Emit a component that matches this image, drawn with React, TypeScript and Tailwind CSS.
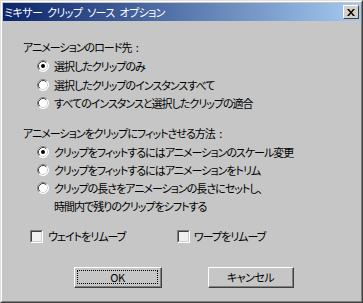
import React from "react";

const font = "font-['MS_UI_Gothic','Noto_Sans_CJK_JP',sans-serif] [font-feature-settings:'palt'] tracking-[-1px] [word-spacing:3px]";

function Radio({ checked }: { checked?: boolean }) {
  return (
    <svg width="12" height="12" viewBox="0 0 12 12" className="shrink-0">
      <circle cx="6" cy="6" r="5.5" fill="#ffffff" />
      <path d="M9.89 2.11 A5.5 5.5 0 0 0 2.11 9.89" fill="none" stroke="#808080" strokeWidth="1" />
      <path d="M2.11 9.89 A5.5 5.5 0 0 0 9.89 2.11" fill="none" stroke="#ffffff" strokeWidth="1" />
      <path d="M9.18 2.82 A4.5 4.5 0 0 0 2.82 9.18" fill="none" stroke="#404040" strokeWidth="1" />
      <path d="M2.82 9.18 A4.5 4.5 0 0 0 9.18 2.82" fill="none" stroke="#d4d0c8" strokeWidth="1" />
      <circle cx="6" cy="6" r="3.5" fill="#ffffff" />
      {checked && <circle cx="6" cy="6" r="2" fill="#000000" />}
    </svg>
  );
}

function Check() {
  return (
    <div className="w-[13px] h-[13px] shrink-0 border-t border-l border-t-[#808080] border-l-[#808080] border-b border-r border-b-white border-r-white">
      <div className="w-full h-full border-t border-l border-t-[#404040] border-l-[#404040] border-b border-r border-b-[#d4d0c8] border-r-[#d4d0c8] bg-[#f0f0f0]" />
    </div>
  );
}

function Btn({ children, focus }: { children: React.ReactNode; focus?: boolean }) {
  return (
    <div className="h-[21px] border-t border-l border-t-white border-l-white border-b border-r border-b-[#404040] border-r-[#404040]">
      <div className="h-full border-b border-r border-b-[#808080] border-r-[#808080] p-[2px]">
        <div
          className={
            "h-full flex items-center justify-center text-[11px] tracking-[-0.5px] text-black " +
            (focus ? "border border-dotted border-black" : "border border-transparent")
          }
        >
          {children}
        </div>
      </div>
    </div>
  );
}

function RadioRow({ label, checked }: { label: string; checked?: boolean }) {
  return (
    <div className="h-[18px] flex items-center pl-[14px]">
      <Radio checked={checked} />
      <span className="ml-[5px] text-[11px] leading-none whitespace-nowrap">{label}</span>
    </div>
  );
}

export default function App() {
  return (
    <div className={"w-[363px] h-[303px] bg-[#c6c6c6] text-black overflow-hidden " + font}>
      <div className="w-full h-full border-t border-l border-t-[#e0e0e0] border-l-[#e0e0e0] border-b border-r border-b-[#404040] border-r-[#404040]">
        <div className="w-full h-full border-t border-l border-t-white border-l-white border-b border-r border-b-[#808080] border-r-[#808080] pt-[1px] pl-[1px] pr-0 flex flex-col">
          <div className="h-[18px] flex items-center justify-between bg-[linear-gradient(to_right,#0a246a,#a6caf0)] pl-[1px] pr-[2px]">
            <span className="text-white text-[11px] tracking-[-0.6px] leading-none whitespace-pre">ミキサー クリップ ソース オプション</span>
            <div className="w-[16px] h-[14px] bg-[#d4d0c8] border-t border-l border-t-white border-l-white border-b border-r border-b-[#404040] border-r-[#404040] flex items-center justify-center">
              <svg width="8" height="7" viewBox="0 0 8 7">
                <path d="M0 0h2l2 2.5 2-2.5h2l-3 3.5 3 3.5h-2l-2-2.5-2 2.5h-2l3-3.5z" fill="#000" />
              </svg>
            </div>
          </div>

          <div className="pl-[20px] flex flex-col">
            <div className="mt-[17px] h-[18px] flex items-center text-[11px] leading-none whitespace-pre">
              アニメーションのロード先 :
            </div>
            <div className="mt-[1px]">
              <RadioRow label="選択したクリップのみ" checked />
              <div className="h-[1px]" />
              <RadioRow label="選択したクリップのインスタンスすべて" />
              <RadioRow label="すべてのインスタンスと選択したクリップの適合" />
            </div>

            <div className="mt-[12px] h-[18px] flex items-center text-[11px] leading-none whitespace-pre">
              アニメーションをクリップにフィットさせる方法 :
            </div>
            <div className="mt-[1px]">
              <RadioRow label="クリップをフィットするにはアニメーションのスケール変更" checked />
              <RadioRow label="クリップをフィットするにはアニメーションをトリム" />
              <RadioRow label="クリップの長さをアニメーションの長さにセットし、" />
              <div className="h-[18px] flex items-center pl-[31px] text-[11px] leading-none whitespace-nowrap">
                時間内で残りのクリップをシフトする
              </div>
            </div>

            <div className="mt-[15px] flex items-center h-[13px]">
              <div className="w-[154px] flex items-center pl-[7px]">
                <Check />
                <span className="ml-[5px] text-[11px] leading-none whitespace-nowrap">ウェイトをリムーブ</span>
              </div>
              <div className="flex items-center">
                <Check />
                <span className="ml-[4px] text-[11px] leading-none whitespace-nowrap">ワープをリムーブ</span>
              </div>
            </div>

            <div className="mt-[24px] flex pl-[51px]">
              <div className="w-[88px]">
                <Btn focus>OK</Btn>
              </div>
              <div className="w-[86px] ml-[46px]">
                <Btn>キャンセル</Btn>
              </div>
            </div>
          </div>
        </div>
      </div>
    </div>
  );
}
